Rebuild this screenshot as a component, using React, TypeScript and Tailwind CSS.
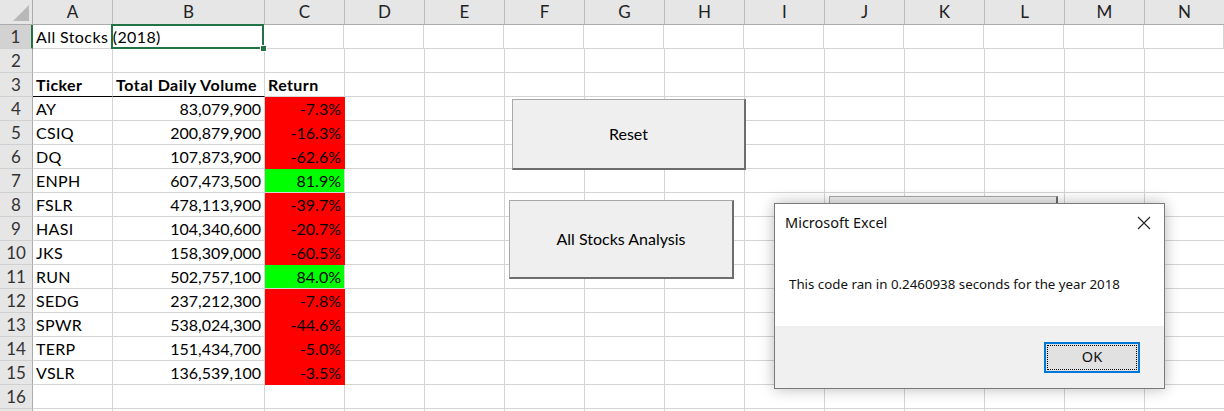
import React from "react";

type Row = { ticker: string; volume: string; ret: string; up: boolean };

const data: Row[] = [
  { ticker: "AY", volume: "83,079,900", ret: "-7.3%", up: false },
  { ticker: "CSIQ", volume: "200,879,900", ret: "-16.3%", up: false },
  { ticker: "DQ", volume: "107,873,900", ret: "-62.6%", up: false },
  { ticker: "ENPH", volume: "607,473,500", ret: "81.9%", up: true },
  { ticker: "FSLR", volume: "478,113,900", ret: "-39.7%", up: false },
  { ticker: "HASI", volume: "104,340,600", ret: "-20.7%", up: false },
  { ticker: "JKS", volume: "158,309,000", ret: "-60.5%", up: false },
  { ticker: "RUN", volume: "502,757,100", ret: "84.0%", up: true },
  { ticker: "SEDG", volume: "237,212,300", ret: "-7.8%", up: false },
  { ticker: "SPWR", volume: "538,024,300", ret: "-44.6%", up: false },
  { ticker: "TERP", volume: "151,434,700", ret: "-5.0%", up: false },
  { ticker: "VSLR", volume: "136,539,100", ret: "-3.5%", up: false },
];

const rest = ["D", "E", "F", "G", "H", "I", "J", "K", "L", "M", "N"];

const cell = "h-[24px] shrink-0 border-r border-b border-[#d4d4d4] px-[3px] flex items-center whitespace-nowrap";
const rowHead =
  "w-[33px] h-[24px] shrink-0 bg-[#e6e6e6] border-r border-b border-r-[#ababab] border-b-[#d0d0d0] flex items-center justify-center text-[17px] text-[#333]";
const colHead =
  "shrink-0 bg-[#e6e6e6] border-r border-b border-r-[#bcbcbc] border-b-[#ababab] flex items-center justify-center text-[17px] text-[#222]";

const EmptyRest = () => (
  <>
    {rest.map((c) => (
      <div key={c} className={`${cell} w-[80px]`} />
    ))}
  </>
);

const SheetButton = ({ label, className }: { label: string; className: string }) => (
  <div
    className={`absolute flex items-center justify-center bg-[#efefef] border-t border-l border-[#a8a8a8] border-r-2 border-b-2 border-r-[#6d6d6d] border-b-[#6d6d6d] text-[16px] text-black ${className}`}
  >
    {label}
  </div>
);

export default function App() {
  return (
    <div className="relative w-[1224px] h-[411px] overflow-hidden bg-white text-[16px] text-black font-['Lato','Liberation_Sans',sans-serif]">
      {/* column headers */}
      <div className="flex h-[25px]">
        <div className="relative w-[33px] h-[25px] shrink-0 bg-[#e6e6e6] border-r border-b border-[#ababab]">
          <svg className="absolute right-[3px] bottom-[3px]" width="16" height="16">
            <polygon points="16,0 16,16 0,16" fill="#b8b8b8" />
          </svg>
        </div>
        <div className={`${colHead} w-[80px]`}>A</div>
        <div className={`${colHead} w-[152px] bg-[#d2d2d2] text-[#1d5e36]`}>B</div>
        <div className={`${colHead} w-[80px]`}>C</div>
        {rest.map((c) => (
          <div key={c} className={`${colHead} w-[80px]`}>
            {c}
          </div>
        ))}
      </div>

      {/* row 1 */}
      <div className="flex">
        <div className="w-[33px] h-[24px] shrink-0 bg-[#d2d2d2] border-r-2 border-b border-r-[#217346] border-b-[#d0d0d0] flex items-center justify-center text-[17px] text-[#333]">1</div>
        <div className={`${cell} w-[79px] overflow-visible tracking-[0.4px]`}>All Stocks (2018)</div>
        <div className={`${cell} w-[152px] relative`}>
          <div className="absolute -left-px -top-px w-[153px] h-[25px] border-2 border-[#217346]" />
          <div className="absolute -right-[4px] -bottom-[4px] w-[7px] h-[7px] bg-[#217346] border border-white" />
        </div>
        <div className={`${cell} w-[80px]`} />
        <EmptyRest />
      </div>

      {/* row 2 */}
      <div className="flex">
        <div className={rowHead}>2</div>
        <div className={`${cell} w-[80px]`} />
        <div className={`${cell} w-[152px]`} />
        <div className={`${cell} w-[80px]`} />
        <EmptyRest />
      </div>

      {/* row 3 */}
      <div className="flex font-bold">
        <div className={rowHead}>
          <span className="font-normal">3</span>
        </div>
        <div className={`${cell} w-[80px] border-b-black tracking-[0.4px]`}>Ticker</div>
        <div className={`${cell} w-[152px] border-b-black tracking-[0.5px]`}>Total Daily Volume</div>
        <div className={`${cell} w-[80px] tracking-[0.4px]`}>Return</div>
        <EmptyRest />
      </div>

      {data.map((r, i) => (
        <div key={r.ticker} className="flex">
          <div className={rowHead}>{i + 4}</div>
          <div className={`${cell} w-[80px] tracking-[0.3px]`}>{r.ticker}</div>
          <div className={`${cell} w-[152px] justify-end`}>{r.volume}</div>
          <div
            className={`${cell} w-[80px] justify-end ${
              r.up ? "bg-[#00ff00] border-[#00ff00]" : "bg-[#ff0000] border-[#ff0000]"
            }`}
          >
            {r.ret}
          </div>
          <EmptyRest />
        </div>
      ))}

      {["16", ""].map((n) => (
        <div key={n} className="flex">
          <div className={rowHead}>{n}</div>
          <div className={`${cell} w-[80px]`} />
          <div className={`${cell} w-[152px]`} />
          <div className={`${cell} w-[80px]`} />
          <EmptyRest />
        </div>
      ))}

      {/* shapes on the sheet */}
      <SheetButton label="Reset" className="left-[512px] top-[99px] w-[234px] h-[71px]" />
      <SheetButton label="All Stocks Analysis" className="left-[509px] top-[200px] w-[225px] h-[79px]" />
      <SheetButton label="" className="left-[829px] top-[196px] w-[229px] h-[71px]" />

      {/* message box */}
      <div className="absolute left-[774px] top-[203px] w-[391px] h-[186px] flex flex-col bg-white border border-[#7a7a7a] shadow-[0_0_14px_rgba(0,0,0,0.28)] font-['Noto_Sans','Open_Sans',sans-serif]">
        <div className="flex items-center justify-between h-[38px] pl-[10px] pr-[13px] text-[14.5px] text-[#111]">
          <span>Microsoft Excel</span>
          <svg width="14" height="14" viewBox="0 0 14 14">
            <path d="M1 1 L13 13 M13 1 L1 13" stroke="#222" strokeWidth="1.1" />
          </svg>
        </div>
        <div className="flex-1 flex items-center pl-[14px] pt-[2px] text-[13.3px] text-[#111]">
          This code ran in 0.2460938 seconds for the year 2018
        </div>
        <div className="h-[62px] bg-[#f0f0f0] flex items-center justify-end pr-[24px]">
          <div className="w-[96px] h-[31px] border-2 border-[#0078d7] bg-[#e1e1e1] p-[1px]">
            <div className="w-full h-full border border-dotted border-black flex items-center justify-center text-[14.5px] text-[#111]">
              OK
            </div>
          </div>
        </div>
      </div>
    </div>
  );
}
